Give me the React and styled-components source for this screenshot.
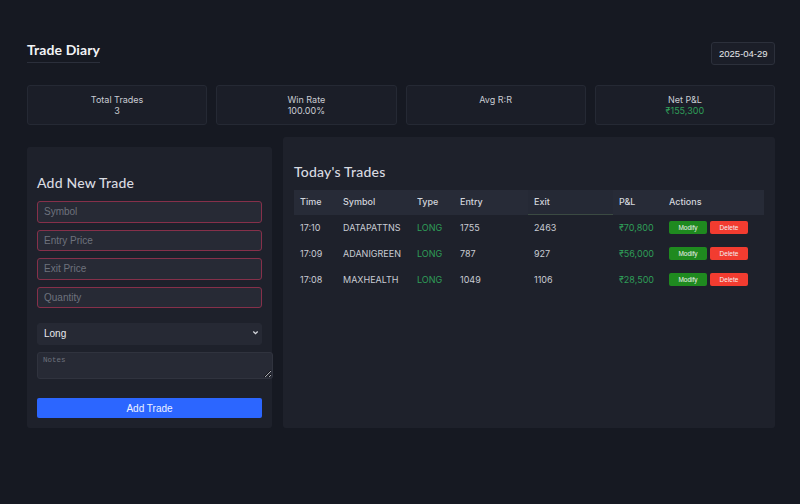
import React, { useState } from "react";
import styled, { createGlobalStyle } from "styled-components";

const trades = [
  { time: "17:10", symbol: "DATAPATTNS", type: "LONG", entry: 1755, exit: 2463, pnl: "₹70,800" },
  { time: "17:09", symbol: "ADANIGREEN", type: "LONG", entry: 787, exit: 927, pnl: "₹56,000" },
  { time: "17:08", symbol: "MAXHEALTH", type: "LONG", entry: 1049, exit: 1106, pnl: "₹28,500" },
];

const stats = [
  { label: "Total Trades", value: "3" },
  { label: "Win Rate", value: "100.00%" },
  { label: "Avg R:R", value: "" },
  { label: "Net P&L", value: "₹155,300", green: true },
];

const App = () => {
  const [date, setDate] = useState("2025-04-29");
  const [side, setSide] = useState("long");

  return (
    <Page>
      <GlobalStyle />
      <TopBar>
        <Title>Trade Diary</Title>
        <DateInput value={date} onChange={(e) => setDate(e.target.value)} />
      </TopBar>
      {/* stats */}
      <StatsRow>
        {stats.map((s) => (
          <StatCard key={s.label}>
            <span>{s.label}</span>
            <StatValue $green={s.green}>{s.value || "\u00a0"}</StatValue>
          </StatCard>
        ))}
      </StatsRow>
      <Main>
        <FormPanel>
          <PanelTitle>Add New Trade</PanelTitle>
          <Field placeholder="Symbol" />
          <Field placeholder="Entry Price" />
          <Field placeholder="Exit Price" />
          <Field placeholder="Quantity" />
          <SelectWrap>
            <Select value={side} onChange={(e) => setSide(e.target.value)}>
              <option value="long">Long</option>
              <option value="short">Short</option>
            </Select>
            <Chevron viewBox="0 0 8 8">
              <path d="M1.5 2.8 L4 5.3 L6.5 2.8" />
            </Chevron>
          </SelectWrap>
          <Notes placeholder="Notes" />
          <AddButton type="button">Add Trade</AddButton>
        </FormPanel>
        <TablePanel>
          <PanelTitle $top>Today's Trades</PanelTitle>
          <Table>
            <colgroup>
              <col style={{ width: 43 }} />
              <col style={{ width: 74 }} />
              <col style={{ width: 43 }} />
              <col style={{ width: 74 }} />
              <col style={{ width: 85 }} />
              <col style={{ width: 50 }} />
              <col />
            </colgroup>
            <thead>
              <tr>
                <Th>Time</Th>
                <Th>Symbol</Th>
                <Th>Type</Th>
                <Th>Entry</Th>
                <Th $active>Exit</Th>
                <Th>P&amp;L</Th>
                <Th>Actions</Th>
              </tr>
            </thead>
            <tbody>
              {trades.map((t) => (
                <tr key={t.time}>
                  <Td>{t.time}</Td>
                  <Td>{t.symbol}</Td>
                  <Td $green>{t.type}</Td>
                  <Td>{t.entry}</Td>
                  <Td>{t.exit}</Td>
                  <Td $green>{t.pnl}</Td>
                  <Td>
                    <Actions>
                      <SmallButton $kind="modify">Modify</SmallButton>
                      <SmallButton $kind="delete">Delete</SmallButton>
                    </Actions>
                  </Td>
                </tr>
              ))}
            </tbody>
          </Table>
        </TablePanel>
      </Main>
    </Page>
  );
};

export default App;
//
const GlobalStyle = createGlobalStyle`
  html, body {
    margin: 0;
    background: #161922;
    font-family: "Inter", "Liberation Sans", sans-serif;
  }
  * { box-sizing: border-box; }
`;

const Page = styled.div`
  width: 800px;
  min-height: 504px;
  padding: 36px 25px 0 27px;
  background: #161922;
`;

const TopBar = styled.div`
  display: flex;
  justify-content: space-between;
  align-items: flex-start;
  height: 43px;
`;

const Title = styled.h1`
  margin: 5px 0 0;
  padding-bottom: 4px;
  width: 73px;
  font-family: "Lato", "Inter", sans-serif;
  font-size: 14px;
  font-weight: 700;
  letter-spacing: 0.1px;
  color: #f2f3f6;
  white-space: nowrap;
  border-bottom: 1px solid #2b2f3b;
`;

const DateInput = styled.input.attrs({ type: "text" })`
  margin-top: 6px;
  width: 64px;
  height: 23px;
  padding: 0 5px 0 7px;
  font-family: "Liberation Sans", sans-serif;
  font-size: 9.5px;
  color: #e6e8ec;
  background: #1b1e28;
  border: 1px solid #2c303b;
  border-radius: 3px;
  outline: none;
`;

const StatsRow = styled.div`
  display: grid;
  grid-template-columns: repeat(4, 1fr);
  gap: 9px;
  margin-top: 6px;
`;

const StatCard = styled.div`
  height: 40px;
  display: flex;
  flex-direction: column;
  align-items: center;
  justify-content: center;
  font-size: 9px;
  line-height: 11px;
  color: #c9ccd3;
  background: #1b1e28;
  border: 1px solid #252934;
  border-radius: 3px;
`;

const StatValue = styled.span`
  color: ${(p) => (p.$green ? "#2f9e58" : "#c9ccd3")};
`;

const Main = styled.div`
  display: grid;
  grid-template-columns: 245px 1fr;
  gap: 11px;
  margin-top: 12px;
  align-items: end;
`;

const Panel = styled.div`
  background: #1e212b;
  border-radius: 3px;
  display: flex;
  flex-direction: column;
`;

const FormPanel = styled(Panel)`
  height: 281px;
  padding: 10px 10px 10px;
`;

const TablePanel = styled(Panel)`
  height: 291px;
  padding: 11px 11px;
`;

const PanelTitle = styled.h2`
  margin: ${(p) => (p.$top ? "15px 0 10px" : "17px 0 10px")};
  font-family: "Lato", "Inter", sans-serif;
  font-size: 14px;
  font-weight: 500;
  letter-spacing: 0.2px;
  color: #d9dbe1;
`;

const Field = styled.input.attrs({ type: "text" })`
  width: 225px;
  height: 22px;
  padding: 0 6px;
  margin-bottom: 7px;
  font-family: "Liberation Sans", sans-serif;
  font-size: 10px;
  color: #e6e8ec;
  background: #272a35;
  border: 1px solid #86304a;
  border-radius: 3px;
  outline: none;
  &::placeholder {
    color: #6e727d;
  }
`;

const SelectWrap = styled.div`
  position: relative;
  width: 225px;
  margin-top: 6px;
`;

const Select = styled.select`
  width: 225px;
  height: 22px;
  padding: 0 6px;
  appearance: none;
  font-family: "Liberation Sans", sans-serif;
  font-size: 10px;
  color: #e6e8ec;
  background: #262934;
  border: 1px solid #262934;
  border-radius: 3px;
  outline: none;
`;

const Chevron = styled.svg`
  position: absolute;
  right: 3px;
  top: 8px;
  width: 7px;
  height: 7px;
  fill: none;
  stroke: #d6d8de;
  stroke-width: 1.5;
  pointer-events: none;
`;

const Notes = styled.textarea`
  width: 236px;
  height: 28px;
  margin-top: 7px;
  padding: 3px 5px;
  font-family: "Liberation Mono", monospace;
  font-size: 7.5px;
  color: #e6e8ec;
  background: #272a35;
  border: 1px solid #30333e;
  border-radius: 3px;
  outline: none;
  &::placeholder {
    color: #6e727d;
  }
`;

const AddButton = styled.button`
  width: 225px;
  height: 20px;
  margin-top: 19px;
  font-family: "Liberation Sans", sans-serif;
  font-size: 10px;
  color: #eef2ff;
  background: #2c66ff;
  border: none;
  border-radius: 2px;
  cursor: pointer;
`;

const Table = styled.table`
  width: 470px;
  table-layout: fixed;
  border-collapse: collapse;
`;

const Th = styled.th`
  height: 24px;
  padding: 0 6px;
  text-align: left;
  font-size: 9px;
  font-weight: 500;
  color: #d2d5dc;
  background: ${(p) => (p.$active ? "#252935" : "#272b37")};
  border-bottom: 1px solid ${(p) => (p.$active ? "#3b4a42" : "#272b37")};
`;

const Td = styled.td`
  height: 26px;
  padding: 0 6px;
  font-size: 9px;
  color: ${(p) => (p.$green ? "#2f9e58" : "#c9ccd3")};
  white-space: nowrap;
`;

const Actions = styled.div`
  display: flex;
  gap: 3px;
`;

const SmallButton = styled.button`
  width: 38px;
  height: 13px;
  padding: 0;
  font-family: "Liberation Sans", sans-serif;
  font-size: 6.5px;
  color: #f2f2f2;
  background: ${(p) => (p.$kind === "delete" ? "#f23c30" : "#1f8a1f")};
  border: none;
  border-radius: 2px;
  cursor: pointer;
`;
